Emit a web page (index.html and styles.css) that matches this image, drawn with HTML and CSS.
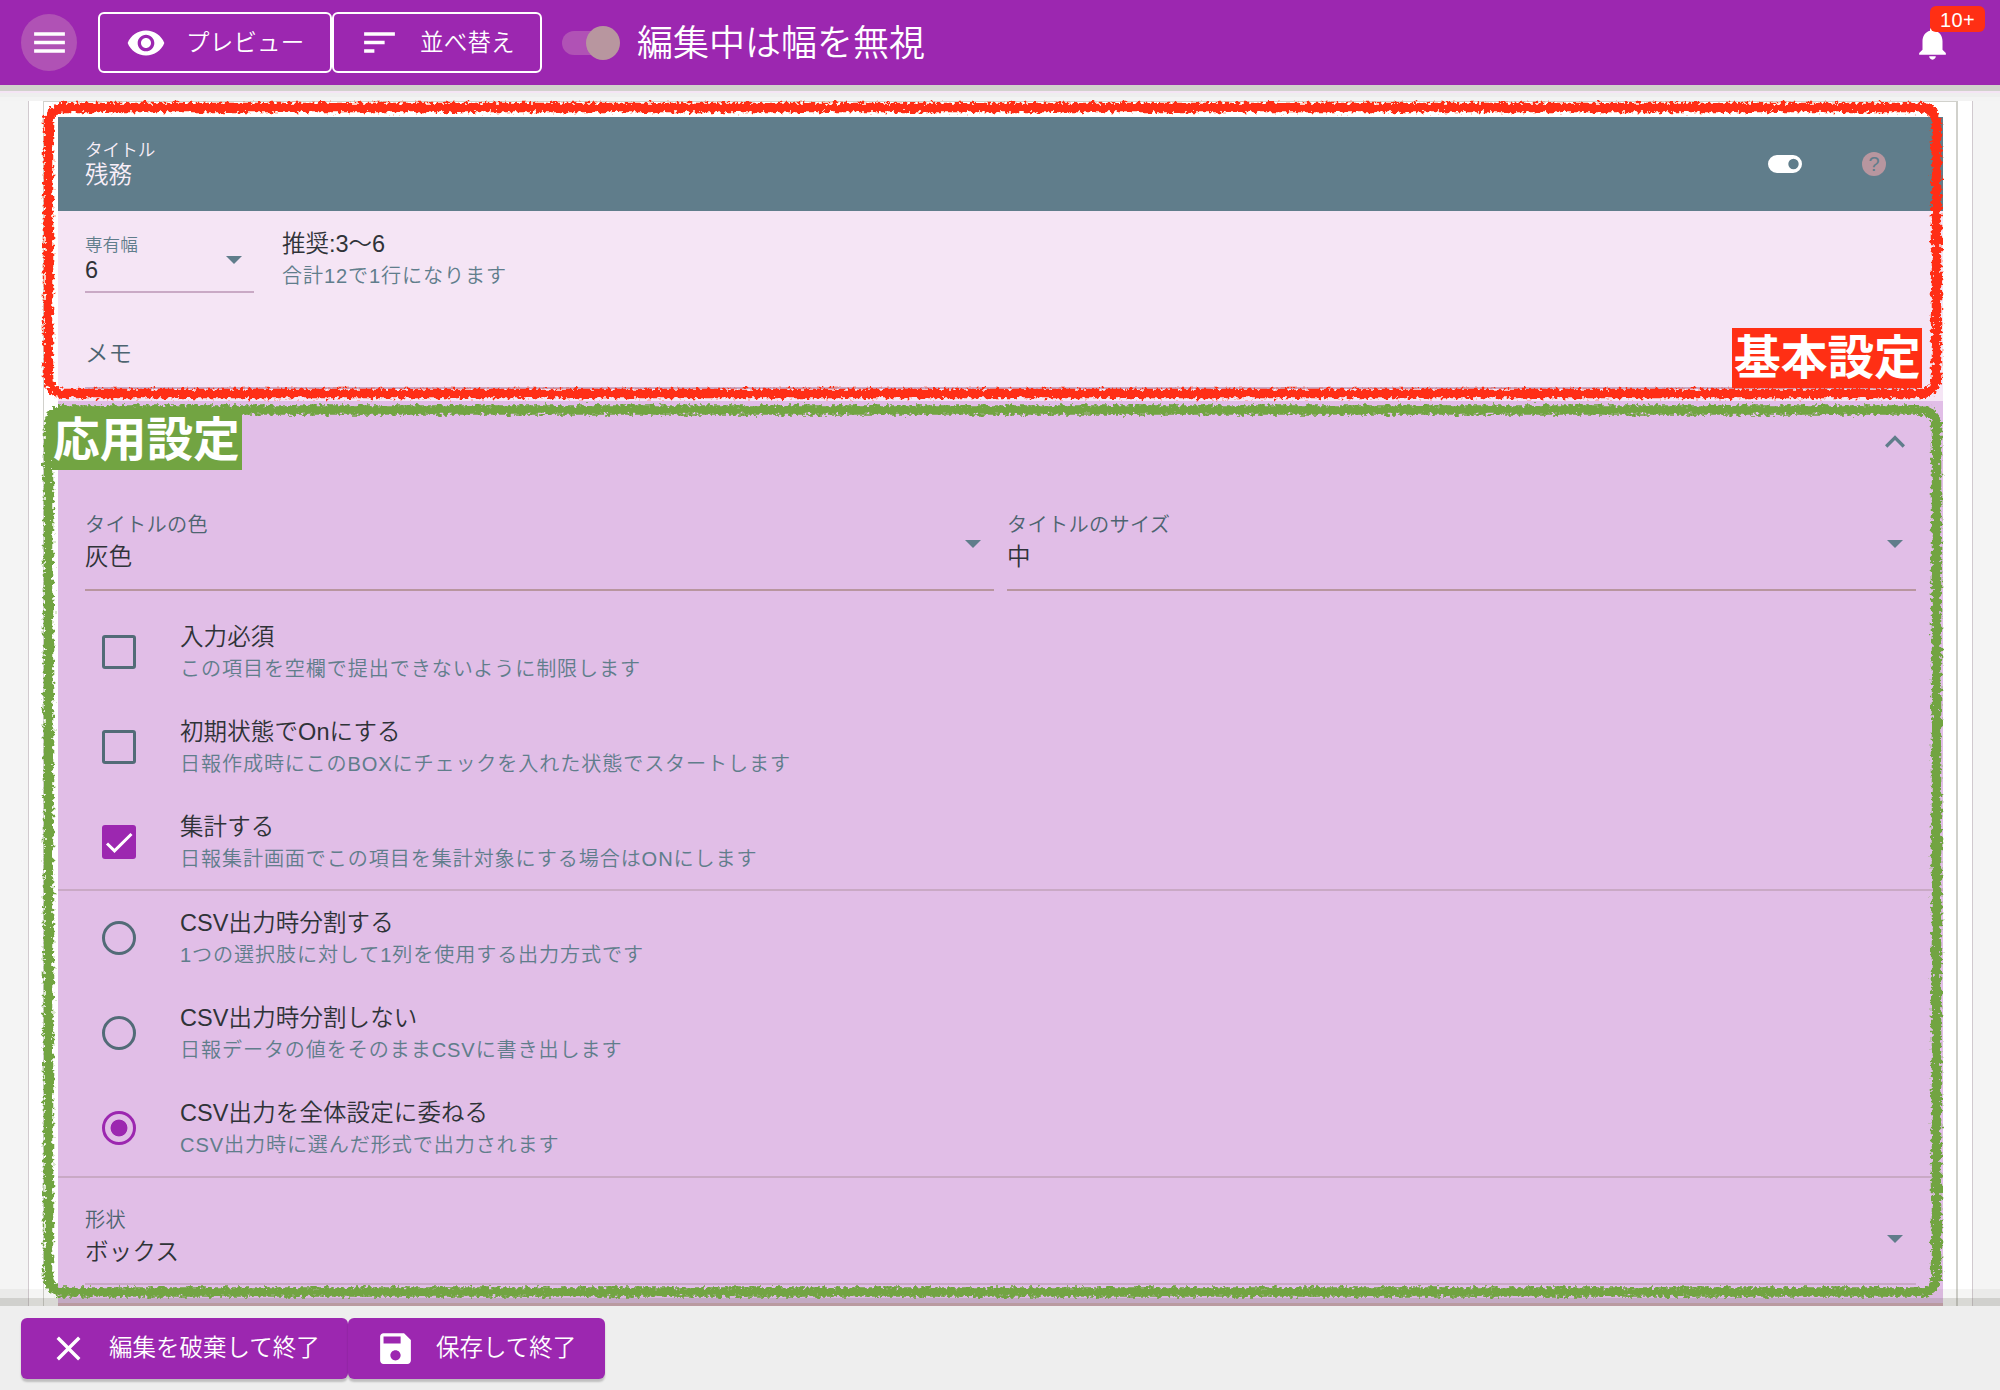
FILE: index.html
```html
<!DOCTYPE html>
<html lang="ja">
<head>
<meta charset="utf-8">
<title>日報項目の編集</title>
<link rel="stylesheet" href="styles.css">
</head>
<body>
<div class="app">
  <header class="topbar">
    <button class="menu" aria-label="menu"><svg viewBox="0 0 24 24" width="41" height="41"><path d="M3 18h18v-2H3v2zm0-5h18v-2H3v2zm0-7v2h18V6H3z"/></svg></button>
    <div class="group">
      <button class="outline preview"><svg viewBox="0 0 24 24" width="40" height="40"><path d="M12 4.5C7 4.5 2.730 7.610 1 12c1.730 4.390 6 7.500 11 7.500s9.270-3.110 11-7.500c-1.730-4.390-6-7.500-11-7.500zM12 17c-2.760 0-5-2.240-5-5s2.240-5 5-5 5 2.240 5 5-2.240 5-5 5zm0-8c-1.660 0-3 1.340-3 3s1.340 3 3 3 3-1.340 3-3-1.340-3-3-3z"/></svg><span>プレビュー</span></button>
      <button class="outline sort"><svg viewBox="0 0 24 24" width="41" height="41"><path d="M3 18h6v-2H3v2zM3 6v2h18V6H3zm0 7h12v-2H3v2z"/></svg><span>並べ替え</span></button>
    </div>
    <div class="toggle"><i class="knob"></i></div>
    <h1 class="heading">編集中は幅を無視</h1>
    <div class="bell">
      <svg viewBox="0 0 24 24" width="41" height="40"><path d="M12 22c1.100 0 2-.9 2-2h-4c0 1.100.9 2 2 2zm6-6v-5c0-3.070-1.630-5.640-4.500-6.320V4c0-.83-.67-1.500-1.500-1.500s-1.500.67-1.500 1.500v.68C7.640 5.360 6 7.920 6 11v5l-2 2v1h16v-1l-2-2z"/></svg>
      <span class="count">10+</span>
    </div>
  </header>

  <main class="page">
    <div class="sheet"><div class="panel">
      <section class="card">
        <div class="card-head">
          <div class="field"><span class="label-s">タイトル</span><span class="value-s">残務</span></div>
          <svg class="switch-icon" viewBox="0 0 34 18" width="34" height="18"><path fill-rule="evenodd" d="M9 0h16a9 9 0 0 1 0 18H9A9 9 0 0 1 9 0zm16.500 3.800a5.200 5.200 0 1 0 0 10.400 5.200 5.200 0 0 0 0-10.400z"/></svg>
          <div class="help">?</div>
        </div>
        <div class="basic">
          <div class="basic-row">
            <div class="width-select"><div class="field"><span class="label-s">専有幅</span><span class="value-s">6</span></div><i class="caret"></i></div>
            <div class="lines"><span class="title">推奨:3〜6</span><span class="caption">合計12で1行になります</span></div>
          </div>
          <div class="memo">メモ</div>
        </div>
        <div class="advanced">
          <div class="expand"><svg viewBox="0 0 24 24" width="40" height="40"><path d="M12 8l-6 6 1.410 1.410L12 10.830l4.590 4.580L18 14z"/></svg></div>
          <div class="selects">
            <div class="select"><div><span class="label">タイトルの色</span><span class="value">灰色</span></div><i class="caret"></i></div>
            <div class="select"><div><span class="label">タイトルのサイズ</span><span class="value">中</span></div><i class="caret"></i></div>
          </div>
          <div class="options checks">
            <label class="option"><i class="box"></i><span class="lines"><span class="title">入力必須</span><span class="caption">この項目を空欄で提出できないように制限します</span></span></label>
            <label class="option"><i class="box"></i><span class="lines"><span class="title">初期状態でOnにする</span><span class="caption">日報作成時にこのBOXにチェックを入れた状態でスタートします</span></span></label>
            <label class="option"><i class="box on"><svg viewBox="0 0 34 34" width="34" height="34"><path d="M5 18.500l7.500 7.300L29.500 9"/></svg></i><span class="lines"><span class="title">集計する</span><span class="caption">日報集計画面でこの項目を集計対象にする場合はONにします</span></span></label>
          </div>
          <div class="options radios">
            <label class="option"><i class="radio"></i><span class="lines"><span class="title">CSV出力時分割する</span><span class="caption">1つの選択肢に対して1列を使用する出力方式です</span></span></label>
            <label class="option"><i class="radio"></i><span class="lines"><span class="title">CSV出力時分割しない</span><span class="caption">日報データの値をそのままCSVに書き出します</span></span></label>
            <label class="option"><i class="radio on"></i><span class="lines"><span class="title">CSV出力を全体設定に委ねる</span><span class="caption">CSV出力時に選んだ形式で出力されます</span></span></label>
          </div>
          <div class="shape"><div class="select"><div><span class="label">形状</span><span class="value">ボックス</span></div><i class="caret"></i></div></div>
        </div>
      </section>
    </div></div>
  </main>

  <footer class="actions">
    <button class="solid discard"><svg viewBox="0 0 24 24" width="41" height="41"><path d="M19 6.410L17.590 5 12 10.590 6.410 5 5 6.410 10.590 12 5 17.590 6.410 19 12 13.410 17.590 19 19 17.590 13.410 12z"/></svg><span>編集を破棄して終了</span></button>
    <button class="solid save"><svg viewBox="0 0 24 24" width="41" height="41"><path d="M17 3H5c-1.110 0-2 .9-2 2v14c0 1.100.89 2 2 2h14c1.100 0 2-.9 2-2V7l-4-4zm-5 16c-1.660 0-3-1.340-3-3s1.340-3 3-3 3 1.340 3 3-1.340 3-3 3zm3-10H5V5h10v4z"/></svg><span>保存して終了</span></button>
  </footer>

  <svg class="marks" viewBox="0 0 2000 1390" width="2000" height="1390">
    <defs>
      <filter id="crayon" filterUnits="userSpaceOnUse" x="0" y="0" width="2000" height="1390">
        <feTurbulence type="fractalNoise" baseFrequency="0.27" numOctaves="2" seed="4" result="n"/>
        <feDisplacementMap in="SourceGraphic" in2="n" scale="9" xChannelSelector="R" yChannelSelector="G"/>
      </filter>
    </defs>
    <g filter="url(#crayon)" fill="none" stroke-width="9.500">
      <rect class="mark-basic" x="48.500" y="107.500" width="1888" height="286" rx="15"/>
      <rect class="mark-advanced" x="48.500" y="410" width="1888" height="882" rx="15"/>
    </g>
  </svg>
  <div class="tag tag-basic">基本設定</div>
  <div class="tag tag-advanced">応用設定</div>
</div>
</body>
</html>
```
FILE: styles.css
```css
* { box-sizing: border-box; }
body { margin: 0; font-family: "Liberation Sans", "Noto Sans CJK JP", sans-serif; font-weight: 350; font-size: 23.5px; color: #2f3338; }
button { font: inherit; color: #fff; border: 0; padding: 0; background: none; }
svg { display: block; flex: none; }
span { display: block; white-space: nowrap; }
.app { position: relative; width: 2000px; height: 1390px; overflow: hidden; display: flex; flex-direction: column; background: #f4f4f4; }

.topbar { position: relative; z-index: 2; flex: none; height: 85px; background: #9c27b0; color: #fff; fill: #fff; display: flex; align-items: center; padding: 0 47px 0 21px; box-shadow: 0 6px 0 #d1d1cc, 0 8px 0 #f5e5f5, 0 12px 0 #eee, 0 16px 0 #f3f3f3; }
.menu { width: 56px; height: 57px; border-radius: 50%; background: #b052b5; display: flex; align-items: center; justify-content: center; }
.group { display: flex; margin-left: 21px; }
.outline { height: 61px; border: 2px solid #fff; border-radius: 6px; display: flex; align-items: center; }
.outline span, .solid span { padding-bottom: 3px; }
.solid span { padding-bottom: 5px; }
.preview { width: 234px; padding-left: 26px; gap: 20px; letter-spacing: .2px; }
.sort { width: 210px; padding-left: 25px; gap: 20px; letter-spacing: .2px; }
.toggle { width: 53px; height: 24px; border-radius: 12px; background: #b052b5; margin-left: 20px; display: flex; align-items: center; }
.knob { flex: none; width: 34px; height: 34px; border-radius: 50%; background: #b8969f; margin-left: 24px; }
.heading { margin: 2px 0 0 22px; font-size: 36px; font-weight: 350; line-height: 50px; white-space: nowrap; }
.bell { position: relative; margin-left: auto; margin-top: 0; }
.count { position: absolute; left: 18px; top: -17px; width: 55px; height: 26px; border-radius: 6px; background: #ff2f14; font-size: 20px; line-height: 28px; letter-spacing: .4px; text-align: center; }

.page { flex: none; height: 1221px; display: flex; padding: 0 27px 0 28px; overflow: hidden; }
.sheet { flex: 1; background: #fff; border: solid #d1cacf; border-width: 0 1px; padding: 16px 14px 0; display: flex; }
.panel { flex: 1; border: 1px solid #d1d1cc; border-right-width: 2px; border-bottom: 0; padding: 15px 13px 0 14px; }
.card { height: 1189px; background: #e1bee7; box-shadow: inset 0 -3px #d3a9b6; overflow: hidden; }
.card-head { height: 94px; background: #607d8b; color: #f8eef8; display: flex; align-items: center; padding: 0 57px 0 27px; }
.field span { height: 25px; line-height: 25px; }
.card-head .field { padding-bottom: 2px; }
.label-s { font-size: 17.6px; }
.switch-icon { fill: #fff; margin-left: auto; }
.help { width: 24px; height: 24px; border-radius: 50%; background: #b8969f; color: #607d8b; font-size: 20px; line-height: 25px; text-align: center; margin-left: 60px; }
.basic { height: 190px; background: #f5e5f5; padding: 19px 27px 0; }
.basic-row { display: flex; gap: 28px; height: 66px; }
.width-select { width: 169px; height: 63px; border-bottom: 2px solid #c9a9c5; display: flex; justify-content: space-between; padding-right: 12px; }
.width-select .field { padding-top: 3px; }
.width-select .label-s { color: #607d8b; }
.width-select .caret { margin-top: 26px; }
.caret { width: 16px; height: 8px; background: #607d8b; clip-path: polygon(0 0, 100% 0, 50% 100%); }
.basic .lines { margin-top: -2px; }
.title { height: 33px; line-height: 33px; }
.caption { font-size: 20.1px; letter-spacing: .88px; height: 33px; line-height: 31px; color: #607d8b; }
.memo { margin-top: 20px; height: 73px; color: #4d6470; border-bottom: 2px solid #c9a9c5; display: flex; align-items: center; }
.expand { height: 80px; padding: 21px 28px 0; display: flex; justify-content: flex-end; fill: #607d8b; }
.selects { display: grid; grid-template-columns: 1fr 1fr; gap: 13px; padding: 0 27px; }
.select { height: 110px; border-bottom: 2px solid #b8969f; display: flex; justify-content: space-between; padding: 28px 13px 0 0; }
.label { height: 32px; line-height: 32px; font-size: 20.2px; letter-spacing: .3px; color: #4d6470; }
.value { height: 32px; line-height: 32px; letter-spacing: .2px; }
.select .caret { margin-top: 31px; }
.options { border-bottom: 2px solid #c9a9c5; }
.checks { padding-top: 15px; height: 300px; }
.radios { height: 287px; }
.option { display: flex; height: 95px; padding: 15px 0 0 44px; }
.option .lines { margin-left: 44px; }
.option .title { letter-spacing: .1px; }
.radios .lines { margin-top: 1px; }
.box, .radio { flex: none; width: 34px; height: 34px; margin-top: 14px; border: 3px solid #526b77; border-radius: 3px; }
.radio { border-radius: 50%; margin-top: 15px; }
.box.on { background: #9c27b0; border: 0; }
.box path { fill: none; stroke: #fff; stroke-width: 3; }
.radio.on { border-color: #9c27b0; background: radial-gradient(circle, #9c27b0 8px, transparent 8.8px); }
.shape { padding: 0 27px; }
.shape .select { height: 107px; padding-top: 26px; border-bottom-color: #c9a9c5; }

.actions { position: relative; z-index: 2; flex: 1; background: #eee; display: flex; padding: 12px 21px; fill: #fff; box-shadow: 0 -8px 0 rgba(120,120,105,.22), 0 -17px 0 rgba(120,120,105,.07); }
.solid { height: 61px; border-radius: 6px; background: #9c27b0; display: flex; align-items: center; box-shadow: 0 3px 2px rgba(0,0,0,.2); }
.discard { width: 327px; padding-left: 27px; gap: 20px; }
.save { width: 257px; padding-left: 27px; gap: 20px; }

.marks { position: absolute; left: 0; top: 0; z-index: 3; }
.mark-basic { stroke: #ff2f14; }
.mark-advanced { stroke: #72a442; }
.tag { position: absolute; z-index: 3; font-size: 46.7px; font-weight: 700; color: #fff; white-space: nowrap; }
.tag-basic { left: 1732px; top: 328px; width: 190px; height: 60px; line-height: 60px; padding-left: 2px; background: #ff2f14; }
.tag-advanced { left: 52px; top: 410px; width: 190px; height: 60px; line-height: 60px; padding-left: 1px; background: #72a442; }
```
